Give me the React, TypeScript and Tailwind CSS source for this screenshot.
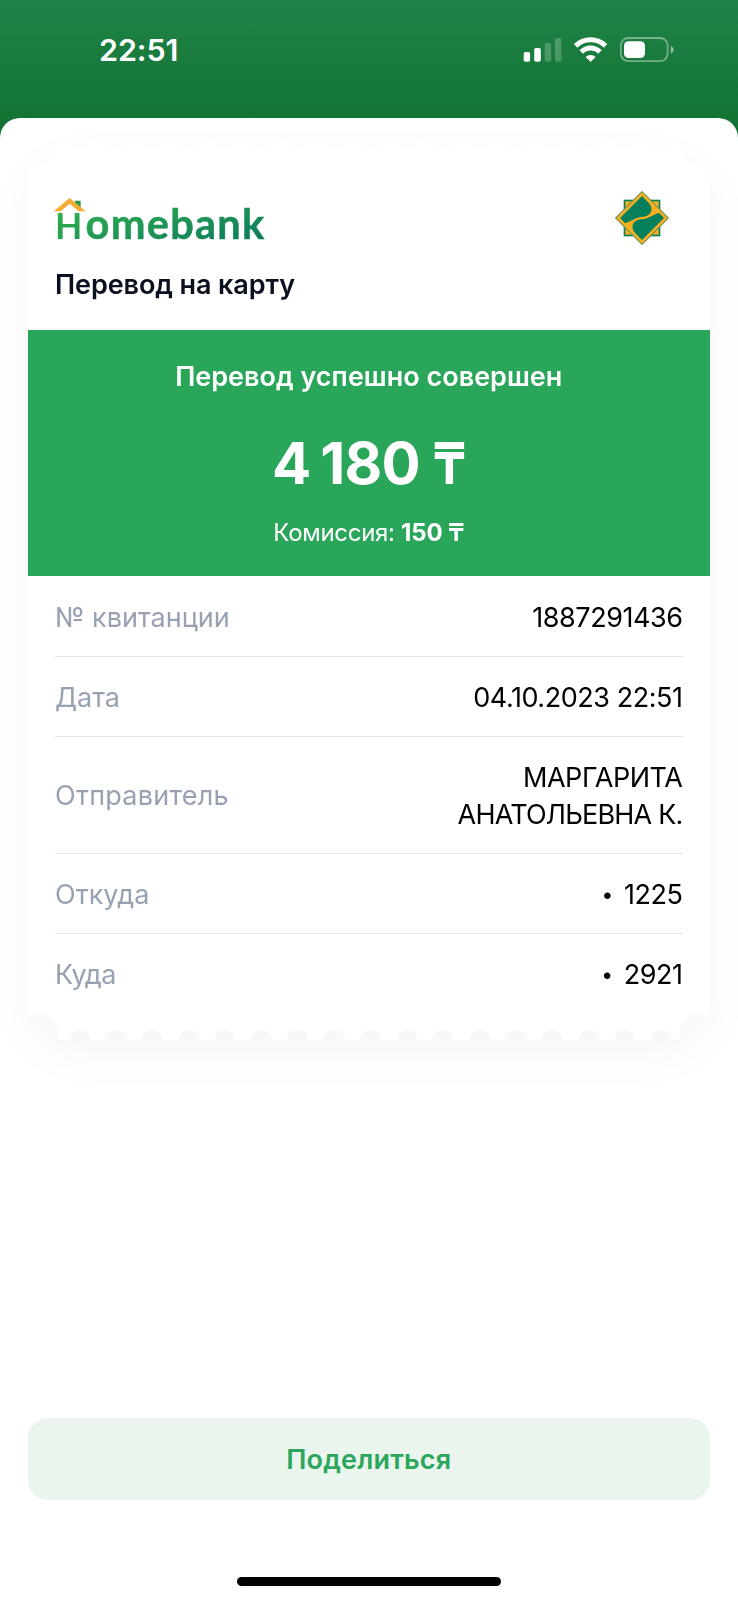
import type { ReactNode } from "react";

const SCALLOPS = Array.from({ length: 17 }, (_, i) => 51.5 + i * 36.4);

// torn paper edge, drawn for the bottom and flipped for the top
const edgePath = [
  "M0 0H10A20 22 0 0 1 30 26",
  ...SCALLOPS.map((x) => `H${x - 11}A11 10 0 0 1 ${x + 11} 26`),
  "H652A20 22 0 0 1 673 0H683V-1H0Z",
].join("");

const TicketEdge = ({ className }: { className?: string }) => (
  <svg
    viewBox="0 0 683 26"
    preserveAspectRatio="none"
    className={`block h-[26px] w-full overflow-visible ${className ?? ""}`}
    fill="#fff"
  >
    <path d={edgePath} />
  </svg>
);

const StatusBar = () => (
  <div className="flex h-[118px] items-start justify-between bg-linear-to-b from-[#1f8446] to-[#127334] pr-[63px] pl-[99px] text-white">
    <div className="mt-[31px] text-[30.5px] leading-[37px] font-semibold tracking-[-0.1px]">
      22:51
    </div>
    <svg width="152" height="26" viewBox="523 37 152 26" className="mt-[37px]" fill="#fff">
      <rect x="523.7" y="52" width="6.4" height="9.8" rx="1.8" />
      <rect x="534.2" y="48" width="6.6" height="13.8" rx="1.8" />
      <rect x="544.7" y="43" width="6.4" height="18.8" rx="1.8" opacity=".22" />
      <rect x="555" y="38" width="6.4" height="23.8" rx="1.8" opacity=".22" />
      <g fill="none" stroke="#fff" strokeWidth="5">
        <path d="M575.6 45.9a21.4 21.4 0 0 1 30 0" />
        <path d="M581.3 52a13 13 0 0 1 18.6 0" />
      </g>
      <path d="M590.6 62.1l-5-5a7.3 7.3 0 0 1 10 0z" />
      <rect
        x="620.8"
        y="38"
        width="46.8"
        height="23.2"
        rx="7.5"
        fill="none"
        stroke="#fff"
        strokeOpacity=".4"
        strokeWidth="1.8"
      />
      <rect x="624" y="41.2" width="21" height="16.8" rx="4.6" />
      <path d="M670.8 46v7.6c3.8-1.4 3.8-6.2 0-7.6z" opacity=".5" />
    </svg>
  </div>
);

const HomebankLogo = () => (
  <div className="relative h-[56px] w-[214px]">
    <div className="flex items-baseline bg-linear-to-br from-[#2fae4c] from-20% to-[#04735c] bg-clip-text pt-[8px] font-[Lato] text-[41.5px] leading-[50px] font-bold text-transparent">
      <span className="w-[30.5px] text-[35.5px]">H</span>
      <span className="tracking-[1.3px] [-webkit-text-stroke:0.5px_transparent]">omebank</span>
    </div>
    <svg
      width="34"
      height="18"
      viewBox="0 0 102 54"
      className="absolute top-[8px] left-[-2px]"
    >
      <path d="M66 8h17v30L66 26z" fill="#2a9a4a" />
      <path d="M2 40L50 0l48 40H77L50 17 23 40z" fill="#f5ac33" />
    </svg>
  </div>
);

const Emblem = () => (
  <svg width="56" height="56" viewBox="0 0 168 168">
    <rect
      x="31.5"
      y="31.5"
      width="105"
      height="105"
      fill="#f9b01e"
      stroke="#04805c"
      strokeWidth="5"
    />
    <path d="M84 5l79 79-79 79L5 84z" fill="#f9b01e" stroke="#7d9350" strokeWidth="3.5" />
    <g fill="#04805c">
      <path id="wave" d="M18 84L84 18l20 20C121 57 111 76 90 80 66 80 56 92 33 100z" />
      <use href="#wave" transform="rotate(180 84 84)" />
    </g>
  </svg>
);

type RowProps = { label: string; labelClass?: string; children: ReactNode };

const Row = ({ label, labelClass, children }: RowProps) => (
  <div className="flex items-center justify-between border-b border-[#e4e5e7] pt-[22px] pb-[19.5px] leading-[37.5px] last:border-transparent">
    <span className={`text-[#98a1b2] ${labelClass ?? ""}`}>{label}</span>
    <span className="text-right tracking-[-0.45px] text-black">{children}</span>
  </div>
);

const CardNumber = ({ last4 }: { last4: string }) => (
  <span className="flex items-center gap-[11px]">
    <span className="text-[21px] leading-none">•</span>
    {last4}
  </span>
);

export default function App() {
  return (
    <div className="h-[1600px] w-[738px] overflow-hidden bg-[#127334] font-[Inter,sans-serif]">
      <StatusBar />
      <div className="flex h-[1482px] flex-col rounded-t-[20px] bg-white pt-[22px] pr-[28px] pl-[27.5px]">
        <div className="drop-shadow-[0_18px_20px_rgba(0,0,0,0.034)]">
          <TicketEdge className="-scale-y-100" />
          <div className="bg-white">
            <div className="h-[164px] px-[27.5px] pt-[24px]">
              <div className="flex items-start justify-between pr-[12.5px]">
                <HomebankLogo />
                <Emblem />
              </div>
              <h1 className="mt-[22px] text-[27px] leading-[34px] font-semibold tracking-[-0.1px] text-[#0b1020]">
                Перевод на карту
              </h1>
            </div>
            <div className="flex h-[246px] flex-col items-center bg-[#2aa65b] text-white">
              <div className="mt-[30px] text-[27px] leading-[34px] font-semibold">
                Перевод успешно совершен
              </div>
              <div className="mt-[34px] flex text-[58px] leading-[70px] font-bold whitespace-pre">
                <span className="tracking-[-2.4px]">4 </span>
                <span className="tracking-[-0.8px]">180 </span>
                <span className="-mr-[6px] inline-block origin-left scale-x-85">₸</span>
              </div>
              <div className="mt-[20px] text-[24px] leading-[30px] tracking-[-0.3px]">
                Комиссия: <b className="font-bold tracking-[-0.1px]">150 ₸</b>
              </div>
            </div>
            <div className="h-[438px] px-[27.5px] pt-[0.5px] text-[27px]">
              <Row label="№ квитанции">1887291436</Row>
              <Row label="Дата">04.10.2023 22:51</Row>
              <Row label="Отправитель" labelClass="tracking-[0.25px]">
                МАРГАРИТА
                <br />
                <span className="tracking-[-0.8px]">АНАТОЛЬЕВНА К.</span>
              </Row>
              <Row label="Откуда">
                <CardNumber last4="1225" />
              </Row>
              <Row label="Куда" labelClass="tracking-[-0.6px]">
                <CardNumber last4="2921" />
              </Row>
            </div>
          </div>
          <TicketEdge />
        </div>
        <button className="mt-auto h-[82px] shrink-0 rounded-[20px] bg-[#e9f5ed] pt-[2px] text-[27px] font-semibold tracking-[0.2px] text-[#2ba65c]">
          Поделиться
        </button>
        <div className="mx-auto mt-[77px] mb-[14px] h-[9px] w-[264px] shrink-0 rounded-full bg-black" />
      </div>
    </div>
  );
}
